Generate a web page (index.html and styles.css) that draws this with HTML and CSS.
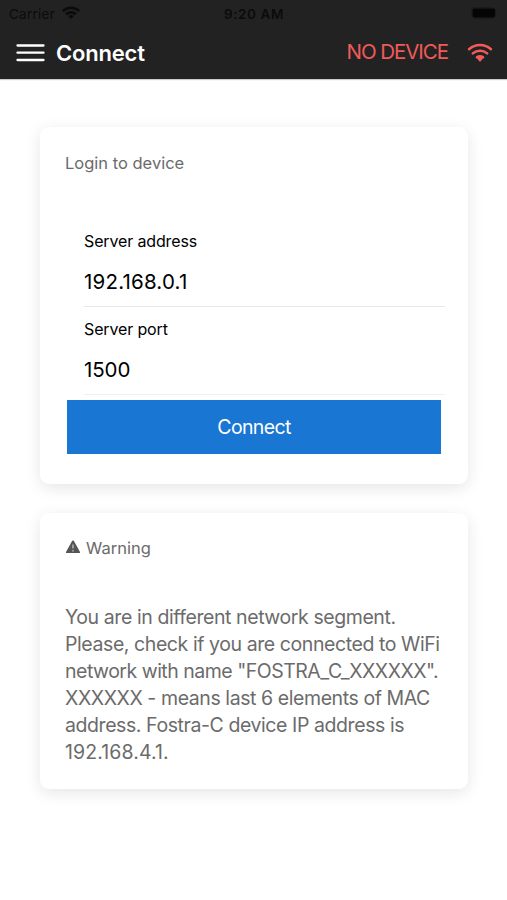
FILE: index.html
```html
<!DOCTYPE html>
<html lang="en">
<head>
<meta charset="utf-8">
<title>Connect</title>
<link rel="stylesheet" href="styles.css">
</head>
<body>
<header class="header">
  <div class="status">
    <div class="carrier"><span class="carrier-name">Carrier</span>
      <svg class="status-wifi" viewBox="0 0 18 13"><path d="M0 4.2a13 13 0 0 1 18 0L16.300 6a10.500 10.500 0 0 0-14.600 0zM3.100 7.300a8.500 8.500 0 0 1 11.800 0L13 9.200a6 6 0 0 0-8 0zM6.200 10.300a4.200 4.200 0 0 1 5.600 0L9 13z"/></svg>
    </div>
    <span class="time">9:20 AM</span>
    <svg class="battery" viewBox="0 0 28 12"><rect x="0.500" y="0.500" width="24" height="11" rx="3" fill="none" stroke="#1b1b1b"/><rect x="1.500" y="1.500" width="22.500" height="9" rx="2"/><path d="M26 4q2 2 0 4z" fill="#1b1b1b"/></svg>
  </div>
  <nav class="toolbar">
    <svg class="menu" viewBox="0 0 29 18"><path d="M1.500 1.500h26M1.500 8.700h26M1.500 16h26"/></svg>
    <h1 class="title">Connect</h1>
    <span class="device">NO DEVICE</span>
    <svg class="wifi" viewBox="0 0 26 19"><path d="M2 6.200a16.500 16.500 0 0 1 22 0M5.800 10.400a11 11 0 0 1 14.400 0M9.900 14.300a5.500 5.500 0 0 1 6.200 0"/><path class="wifi-tip" d="M9.600 14.700Q13 12.300 16.400 14.700L13.700 18.200Q13 18.900 12.300 18.200z"/></svg>
  </nav>
</header>
<main class="content">
  <section class="card login">
    <h2 class="card-title">Login to device</h2>
    <div class="fields">
      <div class="field"><div class="label">Server address</div><div class="value address">192.168.0.1</div></div>
      <div class="field"><div class="label">Server port</div><div class="value">1500</div></div>
    </div>
    <button class="connect">Connect</button>
  </section>
  <section class="card warning">
    <h2 class="card-title"><svg class="alert" viewBox="0 0 16 14"><path d="M7.200.8Q8 0 8.800.8L15 12Q15.500 13 14.300 13H1.700Q.5 13 1 12z"/><path class="mark" d="M8 4.500v4M8 10v1.500"/></svg><span>Warning</span></h2>
    <p class="message">You are in different network segment.<br>Please, check if you are connected to WiFi<br><span class="network">network with name "FOSTRA_C_XXXXXX".</span><br>XXXXXX - means last 6 elements of MAC<br>address. Fostra-C device IP address is<br><span class="ip">192.168.4.1.</span></p>
  </section>
</main>
</body>
</html>
```
FILE: styles.css
```css
* { box-sizing: border-box; }
body { margin: 0; min-height: 900px; background: #fff; font-family: Inter, sans-serif; }
.header { height: 79px; background: #222; box-shadow: 0 1px 1px #0003; }
.status { height: 27px; display: grid; grid-template-columns: 1fr auto 1fr; align-items: center; padding: 0 8px 0 9px; font-size: 13.500px; color: #0b0b0b; }
.carrier { display: flex; align-items: center; gap: 7px; }
.carrier-name { letter-spacing: .25px; }
.status-wifi { width: 18px; height: 13px; fill: #0b0b0b; margin-top: -2px; }
.time { font-weight: 600; letter-spacing: .6px; }
.battery { width: 28px; height: 12px; justify-self: end; fill: #050505; margin-top: -1px; }
.toolbar { display: flex; align-items: center; height: 51px; padding: 0 14px 0 16px; }
.menu { width: 29px; height: 18px; fill: none; stroke: #fff; stroke-width: 2.300; stroke-linecap: round; }
.title { margin: 0 auto 0 11px; font-size: 22px; line-height: 26px; font-weight: 600; letter-spacing: -.2px; color: #fff; }
.device { color: #f05a5a; font-size: 20.500px; line-height: 24px; margin: -2px 19px 0 0; letter-spacing: -1.050px; }
.wifi { width: 26px; height: 19px; fill: none; stroke: #f35b5b; stroke-width: 2.500; stroke-linecap: round; margin-top: -1px; }
.wifi-tip { fill: #f35b5b; stroke: none; }
.content { padding: 48px 39px 0 40px; }
.card { background: #fff; border-radius: 9px; box-shadow: 0 4px 16px #0000001a; color: #6b6b6b; }
.login { height: 357px; padding: 26px 27px 0; margin-bottom: 29px; }
.card-title { display: flex; align-items: center; margin: 0 -2px; font-size: 16.500px; line-height: 20px; font-weight: 400; }
.fields { margin: 46px -4px 0 17px; color: #000; }
.field { height: 88px; padding-top: 11px; border-bottom: 1px solid #e8e8e8; }
.field:last-child { border-color: #f0f0f0; }
.label { font-size: 16px; line-height: 22px; letter-spacing: -.14px; }
.value { font-size: 20.500px; line-height: 28px; margin-top: 16px; letter-spacing: -.1px; }
.address { letter-spacing: .2px; }
.connect { display: block; width: 100%; height: 54px; padding: 0; border: 0; background: #1976d2; color: #fff; font: 19.500px Inter, sans-serif; letter-spacing: -.65px; margin-top: 5px; }
.warning { height: 276px; padding: 25px 25px 0; }
.warning .card-title { margin: 0; }
.alert { width: 16px; height: 14px; margin: -3px 5px 0 0; fill: #555; }
.mark { stroke: #bbb; stroke-width: 1.400; }
.message { margin: 46px 0 0; font-size: 19.500px; line-height: 26.900px; letter-spacing: -.42px; white-space: nowrap; }
.network { letter-spacing: -.5px; }
.ip { letter-spacing: .1px; }
```
